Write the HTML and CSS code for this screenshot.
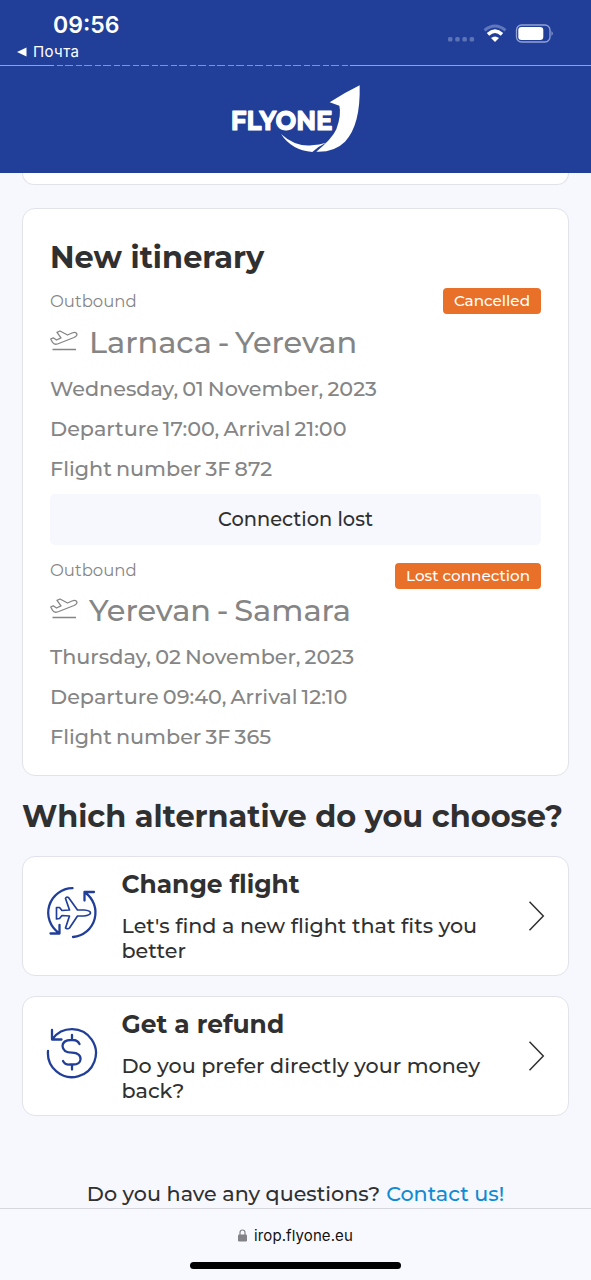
FILE: index.html
```html
<!DOCTYPE html>
<html lang="en">
<head>
<meta charset="utf-8">
<title>FLYONE</title>
<link rel="stylesheet" href="styles.css">
</head>
<body>
<div class="screen">
  <div class="status">
    <div class="status-left">
      <div class="clock">09:56</div>
      <div class="back"><svg width="10" height="10" viewBox="0 0 10 10"><path d="M0 5L9.500 .5V9.500Z" fill="#fff"/></svg><span>Почта</span></div>
    </div>
    <svg class="status-icons" width="110" height="24" viewBox="0 0 110 24">
      <g fill="#5c73b6"><rect x="1" y="15" width="4.500" height="4.500" rx="1.500"/><rect x="8.200" y="15" width="4.500" height="4.500" rx="1.500"/><rect x="15.400" y="15" width="4.500" height="4.500" rx="1.500"/><rect x="22.600" y="15" width="4.500" height="4.500" rx="1.500"/></g>
      <path d="M37.500 8.300Q48 -.2 58.500 8.300" fill="none" stroke="#6077bd" stroke-width="3"/>
      <path d="M41 12.300Q48 6 55 12.300" fill="none" stroke="#fff" stroke-width="3.600"/>
      <path d="M44 16Q48 13 52 16L48 20Z" fill="#fff"/>
      <rect x="69.500" y="3" width="33.500" height="17" rx="5" fill="none" stroke="#92a2d3" stroke-width="1.300"/>
      <rect x="71.300" y="5" width="25" height="13" rx="3.200" fill="#fff"/>
      <path d="M104.500 9Q107 11.500 104.500 14Z" fill="#92a2d3"/>
    </svg>
    <div class="under-text"></div>
  </div>
  <header class="brand">
    <svg width="170" height="90" viewBox="0 0 510 270" role="img" aria-label="FLYONE">
      <text class="logo-text" x="62" y="166" textLength="306" lengthAdjust="spacingAndGlyphs">FLYONE</text>
      <path d="M449 31Q402 54 359 82L388 92Q395 118 379 163Q366 192 319 230Q373 232 405 200Q452 151 449 31Z" fill="#fff"/>
      <path d="M213 177Q256 216 305 211Q328 209 348 203Q326 213 307 231Q245 226 213 177Z" fill="#fff"/>
    </svg>
  </header>
  <main class="content">
    <section class="card card-previous"></section>
    <section class="card itinerary">
      <h2 class="title itinerary-title">New itinerary</h2>
      <div class="leg">
        <div class="leg-head"><span class="direction">Outbound</span><span class="tag">Cancelled</span></div>
        <div class="route"><svg class="takeoff" width="28" height="24" viewBox="0 0 28 24"><path d="M.7 10L3.200 8.800L6.500 11L11 8.900L7 3.300L10 2L17.500 6L22 4Q26.500 2.500 27 5.300Q27 7.200 24 8.500L7.500 15Q4 16 2.500 13.200ZM2.500 20.500H26"/></svg><span>Larnaca - Yerevan</span></div>
        <p class="row">Wednesday, 01 November, 2023</p>
        <p class="row">Departure 17:00, Arrival 21:00</p>
        <p class="row">Flight number 3F 872</p>
      </div>
      <div class="connection">Connection lost</div>
      <div class="leg">
        <div class="leg-head second"><span class="direction">Outbound</span><span class="tag">Lost connection</span></div>
        <div class="route"><svg class="takeoff" width="28" height="24" viewBox="0 0 28 24"><path d="M.7 10L3.200 8.800L6.500 11L11 8.900L7 3.300L10 2L17.500 6L22 4Q26.500 2.500 27 5.300Q27 7.200 24 8.500L7.500 15Q4 16 2.500 13.200ZM2.500 20.500H26"/></svg><span>Yerevan - Samara</span></div>
        <p class="row">Thursday, 02 November, 2023</p>
        <p class="row">Departure 09:40, Arrival 12:10</p>
        <p class="row">Flight number 3F 365</p>
      </div>
    </section>
    <h2 class="title question">Which alternative do you choose?</h2>
    <a class="card option">
      <svg class="option-icon" width="54" height="54" viewBox="0 0 54 54">
        <path d="M27.500 2.200A24.500 24.500 0 0 0 14 47M5.500 47.500H14.500V39M28 51A24.500 24.500 0 0 0 40 6.500M49 6H39.500V14.500"/>
        <path class="plane" d="M20.500 12.500Q21 10.500 23.500 11.500L32.500 24H39Q45.500 24.500 45.500 27Q45.500 29 39 30H32.500L24.500 42Q23 43.500 20.500 42L24.500 30L17 29.500L14.500 32.500L11.500 33V21.500L14.500 21.500L17 24.500L24.500 24Z"/>
      </svg>
      <span class="option-copy"><strong>Change flight</strong><span class="option-text">Let's find a new flight that fits you<br>better</span></span>
      <svg class="chevron" width="18" height="30" viewBox="0 0 18 30"><path d="M1.500 .8L15.300 15L1.500 29.200"/></svg>
    </a>
    <a class="card option">
      <svg class="option-icon" width="54" height="54" viewBox="0 0 54 54">
        <path d="M3 25A24 24 0 1 0 7.500 13M7 4V13.500H16.500"/>
        <path d="M34.500 18Q32.500 14 28 14H26Q18 14 17.500 20Q18 26.700 27 26.700Q36 27 35.500 33.500Q35 38.500 28 38.500H25Q20 39 18 35M27 9V14M27 38.500V43.500"/>
      </svg>
      <span class="option-copy"><strong>Get a refund</strong><span class="option-text">Do you prefer directly your money<br>back?</span></span>
      <svg class="chevron" width="18" height="30" viewBox="0 0 18 30"><path d="M1.500 .8L15.300 15L1.500 29.200"/></svg>
    </a>
    <p class="help"><span>Do you have any questions?</span><a class="contact">Contact us!</a></p>
  </main>
  <footer class="browser">
    <div class="address"><svg width="9" height="13" viewBox="0 0 9 13"><rect y="5.500" width="9" height="7" rx="1.300" fill="#828287"/><path d="M2 6V3.500Q2 1 4.500 1T7 3.500V6" fill="none" stroke="#828287" stroke-width="1.200"/></svg><span>irop.flyone.eu</span></div>
    <div class="home-bar"></div>
  </footer>
</div>
</body>
</html>
```
FILE: styles.css
```css
* { box-sizing: border-box; }
body { margin: 0; }
.screen { width: 591px; height: 1280px; overflow: hidden; display: flex; flex-direction: column; background: #f7f8fe; color: #303030; font-family: Montserrat, Inter, sans-serif; font-weight: 500; }
.status { position: relative; flex: none; height: 66px; background: #213f99; border-bottom: 1px solid #92a2d3; color: #fff; display: flex; justify-content: space-between; font-family: Inter, sans-serif; }
.status-left { padding: 10px 0 0 17px; }
.clock { padding-left: 36px; font-size: 23px; line-height: 30px; font-weight: 600; }
.back { display: flex; align-items: center; gap: 6px; margin-top: 1px; font-size: 15px; line-height: 22px; font-weight: 400; letter-spacing: .4px; }
.status-icons { margin: 22px 34px 0 0; }
.under-text { position: absolute; left: 54px; top: 65px; width: 296px; height: 1px; background: repeating-linear-gradient(90deg, #2b4488 0 3px, #8293cb 3px 9px, #2b4488 9px 11px, #8293cb 11px 19px); }
.brand { flex: none; height: 107px; padding-top: 9px; padding-left: 210px; background: #213f99; }
.logo-text { font-family: Montserrat, Inter, sans-serif; font-size: 80px; font-weight: 700; fill: #fff; stroke: #fff; stroke-width: 3.500; stroke-linejoin: round; }
.content { flex: 1; min-height: 0; overflow: hidden; padding: 0 22px; }
.card { display: block; background: #fff; border: 1px solid #e2e2eb; border-radius: 13px; }
.card-previous { height: 12px; border-top: 0; border-radius: 0 0 13px 13px; }
.itinerary { margin-top: 23px; height: 568px; padding: 28px 27px 0; }
.title { margin: 0; font-weight: 700; white-space: nowrap; }
.itinerary-title { font-size: 30.400px; line-height: 41px; height: 40px; }
.leg-head { display: flex; justify-content: space-between; align-items: center; height: 32px; margin-top: 8px; }
.direction { color: #858585; font-size: 16.500px; line-height: 32px; font-weight: 450; }
.tag { height: 26px; padding: 0 11px; border-radius: 4px; background: #e87028; color: #fff; font-size: 15.200px; line-height: 26px; white-space: nowrap; }
.route { display: flex; align-items: center; gap: 11px; height: 51px; margin-bottom: 1px; color: #858585; font-size: 30.400px; white-space: nowrap; word-spacing: -2.400px; }
.takeoff { margin-top: -3px; fill: none; stroke: #858585; stroke-width: 1.300; stroke-linejoin: round; }
.row { margin: 0; height: 40px; color: #858585; font-size: 20.750px; line-height: 40px; white-space: nowrap; word-spacing: -1.500px; }
.connection { height: 51px; margin-top: 5px; border-radius: 5px; background: #f6f8fd; text-align: center; font-size: 19.400px; line-height: 50px; }
.second { margin-top: 9px; height: 31px; align-items: flex-start; }
.second .tag { margin-top: 9px; }
.question { height: 80px; font-size: 30.400px; line-height: 82px; }
.option { display: flex; height: 120px; padding: 0 22px; margin-bottom: 20px; }
.option-icon { flex: none; margin-top: 29px; fill: none; stroke: #213f99; stroke-width: 2.300; stroke-linecap: round; stroke-linejoin: round; }
.plane { stroke-width: 1.700; }
.option-copy { flex: 1; padding: 12px 0 0 22.500px; white-space: nowrap; }
.option-copy strong { display: block; font-size: 24.900px; line-height: 31px; font-weight: 700; }
.option-text { display: block; margin-top: 13px; font-size: 20.700px; line-height: 25px; }
.chevron { flex: none; margin-top: 44px; fill: none; stroke: #303030; stroke-width: 1.500; }
.help { display: flex; justify-content: center; gap: 6px; margin: 58px 0 0; font-size: 20.700px; line-height: 40px; white-space: nowrap; }
.contact { color: #0f8bd3; }
.browser { flex: none; height: 72px; border-top: 1px solid #d6d7dd; background: #f8f9fe; font-family: Inter, sans-serif; font-weight: 400; color: #111; }
.address { display: flex; align-items: center; justify-content: center; gap: 7px; height: 53px; font-size: 15px; letter-spacing: .1px; }
.home-bar { width: 211px; height: 7px; margin: 0 auto; border-radius: 4px; background: #000; }
```
